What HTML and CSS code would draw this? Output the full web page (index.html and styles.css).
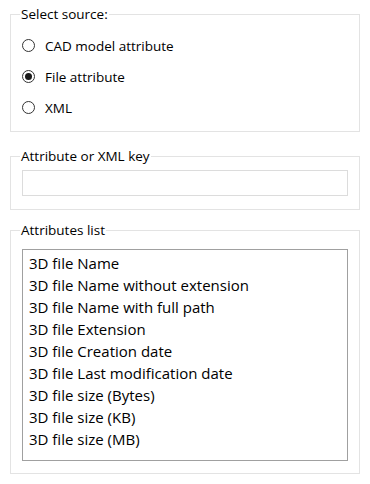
FILE: index.html
```html
<!DOCTYPE html>
<html lang="en">
<head>
    <meta charset="UTF-8">
    <title>Attribute source</title>
<link rel="stylesheet" href="styles.css">
</head>
<body>

<fieldset class="group source">
    <legend>Select source:</legend>
    <label class="option"><input type="radio" name="source"> CAD model attribute</label>
    <label class="option"><input type="radio" name="source" checked> File attribute</label>
    <label class="option"><input type="radio" name="source"> XML</label>
</fieldset>

<fieldset class="group key">
    <legend>Attribute or XML key</legend>
    <input type="text" class="keyInput" disabled>
</fieldset>

<fieldset class="group attrs">
    <legend>Attributes list</legend>
    <ul class="list">
        <li>3D file Name</li>
        <li>3D file Name without extension</li>
        <li>3D file Name with full path</li>
        <li>3D file Extension</li>
        <li>3D file Creation date</li>
        <li>3D file Last modification date</li>
        <li>3D file size (Bytes)</li>
        <li>3D file size (KB)</li>
        <li>3D file size (MB)</li>
    </ul>
</fieldset>

</body>
</html>
```

FILE: styles.css
```css
body {
    font-family: 'Open Sans', 'Noto Sans', sans-serif;
    font-size: 13.5px;
    background-color: white;
    color: black;
    margin: 0;
    padding: 6px 10px 0 10px;
}
.group {
    border: 1px solid #e3e3e3;
    margin: 0;
    padding: 0 11px 0 11px;
}
.group legend {
    padding: 0 1px;
    margin-left: -2px;
    line-height: 16px;
}
.source {
    height: 116px;
    padding-top: 8px;
}
.option {
    display: flex;
    align-items: center;
    height: 31px;
    gap: 10px;
}
.option input {
    appearance: none;
    width: 13px;
    height: 13px;
    margin: 0;
    border: 1px solid #333;
    border-radius: 50%;
    background: white;
    display: grid;
    place-items: center;
}
.option input:checked::after {
    content: "";
    width: 7px;
    height: 7px;
    border-radius: 50%;
    background: #1a1a1a;
}
.key {
    margin-top: 16px;
    padding-top: 6px;
    padding-bottom: 13px;
}
.keyInput {
    display: block;
    box-sizing: border-box;
    width: 100%;
    height: 26px;
    margin: 0;
    border: 1px solid #dcdcdc;
    background: white;
}
.attrs {
    margin-top: 12px;
    padding-top: 11px;
    padding-bottom: 12px;
}
.list {
    list-style: none;
    margin: 0;
    padding: 2px 6px;
    height: 212px;
    box-sizing: border-box;
    border: 1px solid #a0a0a0;
    font-size: 15px;
    line-height: 22px;
}
```
